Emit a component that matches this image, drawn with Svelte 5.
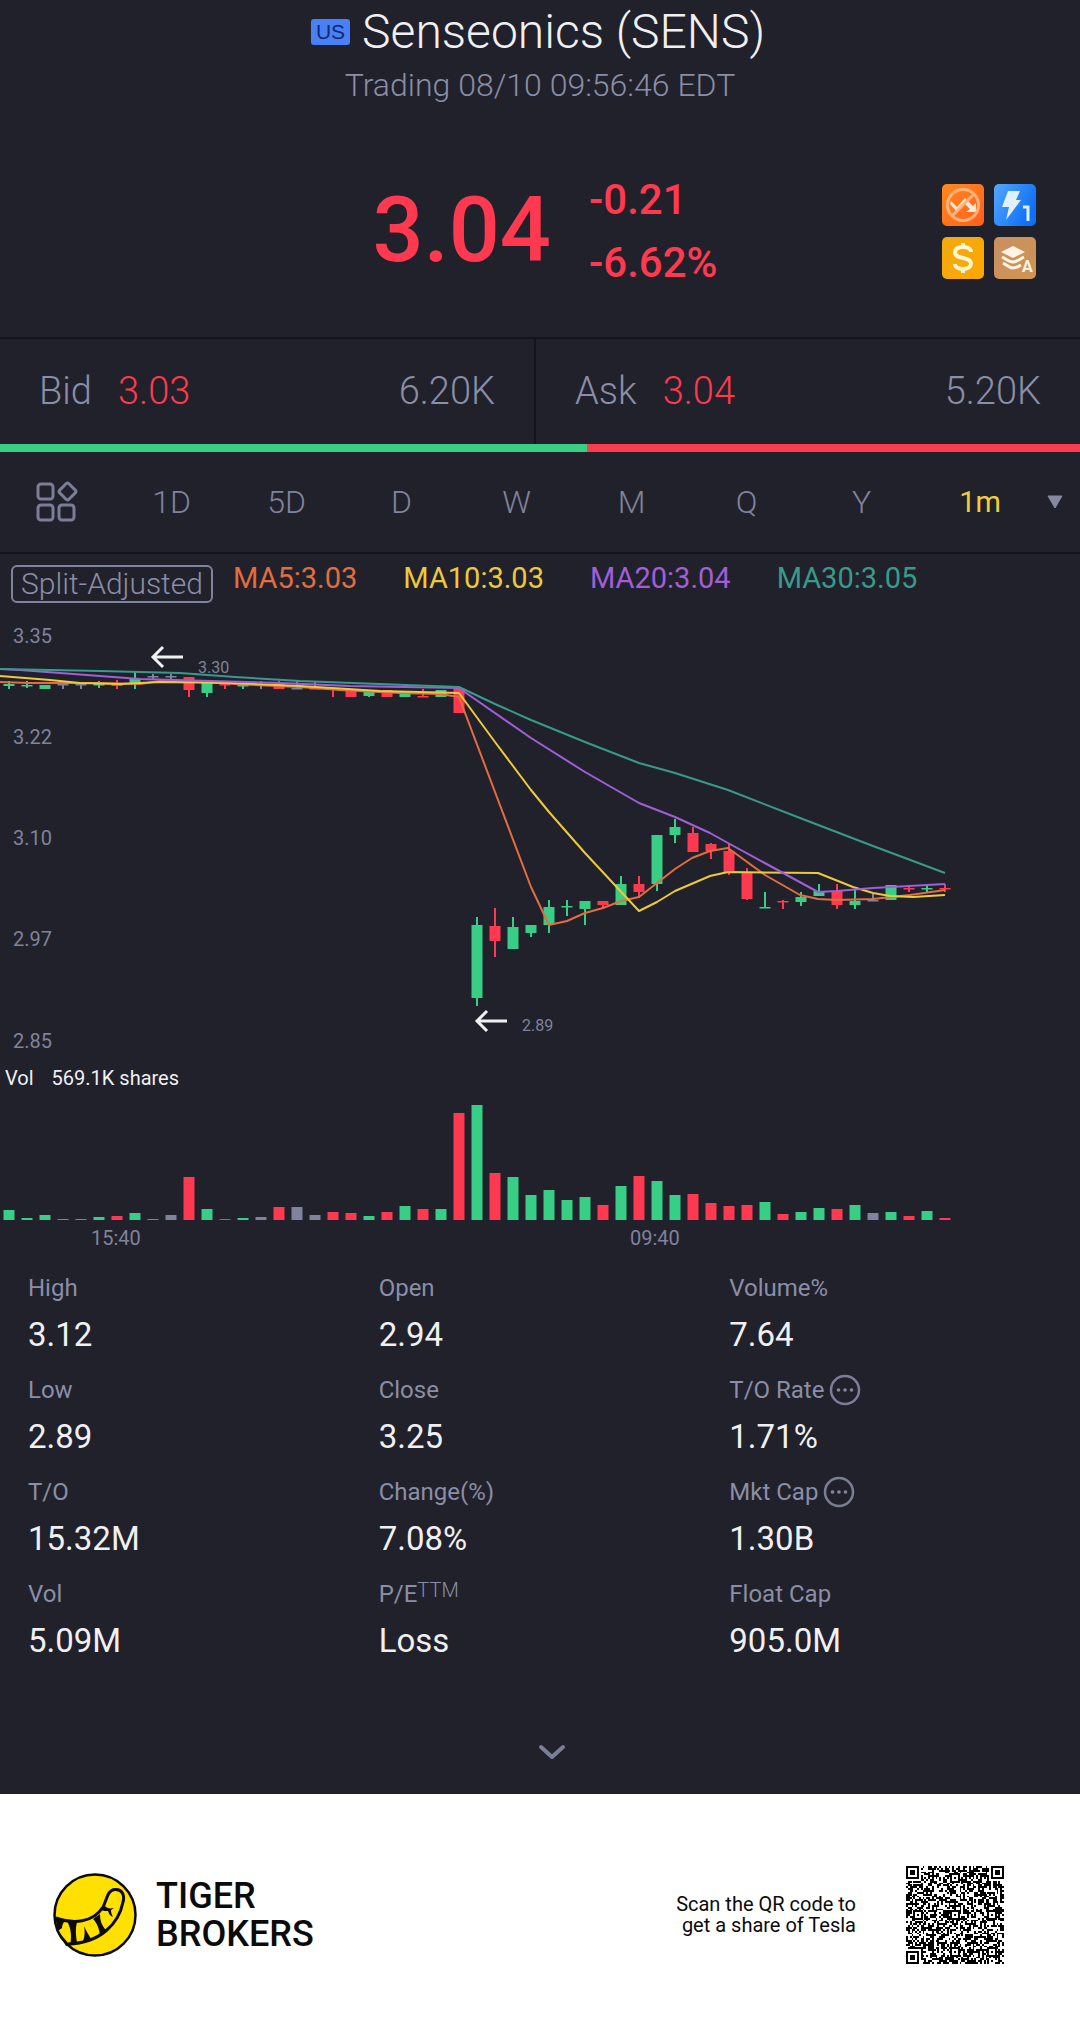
<script lang="ts">
    const periods = ['1D', '5D', 'D', 'W', 'M', 'Q', 'Y'];

    const averages = [
        { label: 'MA5:3.03', cls: 'ma5' },
        { label: 'MA10:3.03', cls: 'ma10' },
        { label: 'MA20:3.04', cls: 'ma20' },
        { label: 'MA30:3.05', cls: 'ma30' }
    ];

    const stats = [
        { label: 'High', value: '3.12' },
        { label: 'Open', value: '2.94' },
        { label: 'Volume%', value: '7.64' },
        { label: 'Low', value: '2.89' },
        { label: 'Close', value: '3.25' },
        { label: 'T/O Rate', value: '1.71%', more: true },
        { label: 'T/O', value: '15.32M' },
        { label: 'Change(%)', value: '7.08%' },
        { label: 'Mkt Cap', value: '1.30B', more: true },
        { label: 'Vol', value: '5.09M' },
        { label: 'P/E', sup: 'TTM', value: 'Loss' },
        { label: 'Float Cap', value: '905.0M' }
    ];

    const axis = [
        { price: '3.35', y: 643 },
        { price: '3.22', y: 744 },
        { price: '3.10', y: 845 },
        { price: '2.97', y: 946 },
        { price: '2.85', y: 1048 }
    ];

    // direction, wick top, body top, body bottom, wick bottom, volume
    type Candle = ['up' | 'down' | 'flat', number, number, number, number, number];
    const candles: Candle[] = [
        ['up', 681, 684, 686, 689, 10],
        ['up', 681, 685, 686, 688, 2],
        ['up', 685, 685, 689, 689, 5],
        ['flat', 682, 684, 685, 689, 1],
        ['flat', 682, 684, 685, 689, 1],
        ['up', 681, 684, 685, 688, 3],
        ['down', 680, 684, 686, 689, 4],
        ['up', 672, 678, 683, 689, 7],
        ['flat', 674, 676, 677, 680, 1],
        ['flat', 674, 676, 677, 680, 5],
        ['down', 677, 677, 690, 697, 43],
        ['up', 683, 683, 693, 697, 11],
        ['down', 684, 684, 685, 689, 1],
        ['up', 683, 685, 686, 689, 2],
        ['flat', 681, 684, 685, 689, 3],
        ['down', 681, 684, 689, 689, 13],
        ['flat', 680, 688, 689, 689, 13],
        ['flat', 681, 688, 689, 689, 5],
        ['down', 688, 688, 689, 697, 8],
        ['down', 689, 689, 697, 697, 7],
        ['up', 690, 690, 696, 697, 4],
        ['down', 690, 690, 697, 697, 8],
        ['up', 692, 692, 697, 697, 14],
        ['down', 689, 696, 697, 697, 11],
        ['up', 690, 690, 697, 697, 11],
        ['down', 688, 688, 713, 713, 107],
        ['up', 917, 925, 998, 1006, 115],
        ['down', 908, 926, 941, 957, 47],
        ['up', 917, 927, 949, 949, 43],
        ['up', 925, 925, 933, 937, 25],
        ['up', 900, 907, 925, 933, 30],
        ['up', 900, 906, 907, 916, 20],
        ['up', 901, 901, 909, 925, 23],
        ['down', 901, 901, 905, 909, 15],
        ['up', 876, 884, 905, 905, 34],
        ['down', 876, 884, 892, 898, 44],
        ['up', 835, 835, 884, 891, 39],
        ['up', 819, 827, 835, 843, 25],
        ['down', 827, 833, 852, 852, 26],
        ['down', 843, 844, 851, 859, 17],
        ['down', 844, 851, 872, 875, 14],
        ['down', 868, 872, 899, 900, 15],
        ['up', 892, 907, 908, 908, 18],
        ['down', 900, 901, 902, 909, 6],
        ['up', 892, 897, 902, 906, 8],
        ['up', 884, 891, 896, 896, 12],
        ['down', 884, 891, 905, 909, 11],
        ['up', 889, 901, 905, 909, 15],
        ['flat', 894, 900, 901, 901, 7],
        ['up', 885, 885, 900, 900, 8],
        ['down', 885, 888, 889, 892, 4],
        ['up', 884, 888, 889, 892, 9],
        ['down', 884, 888, 889, 892, 2]
    ];
    const candleX = (i: number) => 9 + i * 18;

    const lines = [
        {
            cls: 'ma5',
            points:
                '0,682 30,683 100,683 140,684 160,681 200,682 235,684 300,687 340,690 400,693 440,694 459,697 495,792 531,887 549,925 567,921 585,913 603,908 621,901 639,897 657,883 675,869 692,858 710,851 728,848 765,875 800,895 818,899 837,900 873,899 910,895 945,890'
        },
        {
            cls: 'ma10',
            points:
                '0,676 50,680 80,683 120,684 160,682 230,683 300,686 380,691 459,693 495,742 531,790 549,812 585,853 639,911 657,902 675,891 710,876 728,872 818,873 853,887 873,893 890,896 913,897 945,895'
        },
        {
            cls: 'ma20',
            points:
                '0,669 20,670 60,673 140,679 280,683 350,686 459,688 531,738 585,772 639,803 675,817 710,833 728,843 818,892 837,891 873,888 945,884'
        },
        {
            cls: 'ma30',
            points:
                '0,669 100,671 180,673 235,677 300,681 459,687 495,704 531,720 585,742 639,763 675,773 728,790 800,818 873,846 945,873'
        }
    ];

    const QR_SIZE = 53;

    function ring(x: number, y: number, cx: number, cy: number) {
        return Math.max(Math.abs(x - cx), Math.abs(y - cy));
    }

    function buildQr() {
        const finders = [[3, 3], [49, 3], [3, 49]];
        const aligns = [[26, 6], [6, 26], [26, 26], [46, 26], [26, 46], [46, 46]];
        let seed = 20210;
        let d = '';
        for (let y = 0; y < QR_SIZE; y++) {
            for (let x = 0; x < QR_SIZE; x++) {
                seed = (seed * 1103515245 + 12345) % 2147483648;
                let on = seed / 2147483648 > 0.47;
                if (x === 6) on = y % 2 === 0;
                if (y === 6) on = x % 2 === 0;
                for (const [cx, cy] of aligns) {
                    const r = ring(x, y, cx, cy);
                    if (r <= 2) on = r !== 1;
                }
                for (const [cx, cy] of finders) {
                    const r = ring(x, y, cx, cy);
                    if (r <= 4) on = r < 2 || r === 3;
                }
                if (on) d += `M${x} ${y}h1v1h-1z`;
            }
        }
        return d;
    }

    const qrPath = buildQr();
</script>

<main class="page">
    <header class="head">
        <h1 class="title"><span class="market">US</span>Senseonics (SENS)</h1>
        <p class="status">Trading 08/10 09:56:46 EDT</p>
    </header>

    <section class="quote">
        <div class="quote-main">
            <span class="price">3.04</span>
            <div class="change">
                <span>-0.21</span>
                <span>-6.62%</span>
            </div>
        </div>
        <div class="badges">
            <svg viewBox="0 0 42 42">
                <defs>
                    <linearGradient id="g-orange" x1="0" y1="0" x2="1" y2="1">
                        <stop offset="0" stop-color="#ff8a1f" />
                        <stop offset="1" stop-color="#ff5f1c" />
                    </linearGradient>
                </defs>
                <rect width="42" height="42" rx="5" fill="url(#g-orange)" />
                <path d="M9 17l6 6 8-9 8 8 3-3v9H24l4-3-5-5-8 8-7-8z" fill="#ffe9d6" />
                <g fill="none" stroke="#ffb27c" stroke-width="3">
                    <circle cx="21" cy="21" r="15.500" />
                    <path d="M10 32L32 10" />
                </g>
            </svg>
            <svg viewBox="0 0 42 42">
                <defs>
                    <linearGradient id="g-blue" x1="0" y1="0" x2="1" y2="0.500">
                        <stop offset="0" stop-color="#53a8ff" />
                        <stop offset="1" stop-color="#0f6ff5" />
                    </linearGradient>
                </defs>
                <rect width="42" height="42" rx="5" fill="url(#g-blue)" />
                <path d="M14 7h12l-4 9h5L12 36l3-13H8z" fill="#dff0ff" />
                <path d="M29 23h5v14" fill="none" stroke="#dff0ff" stroke-width="3" />
            </svg>
            <svg viewBox="0 0 42 42">
                <defs>
                    <linearGradient id="g-gold" x1="0" y1="0" x2="1" y2="1">
                        <stop offset="0" stop-color="#f0ab13" />
                        <stop offset="1" stop-color="#ffa600" />
                    </linearGradient>
                </defs>
                <rect width="42" height="42" rx="5" fill="url(#g-gold)" />
                <path
                    d="M29 15c0-3-3-5-8-5s-8 2-8 5.500 3 4.500 8 5.500 8 2.500 8 5.500-3 5.500-8 5.500-8-2-8-5M21 6v4M21 32v4"
                    fill="none"
                    stroke="#fff6d2"
                    stroke-width="4"
                />
            </svg>
            <svg viewBox="0 0 42 42">
                <defs>
                    <linearGradient id="g-bronze" x1="0" y1="0" x2="1" y2="1">
                        <stop offset="0" stop-color="#c98f62" />
                        <stop offset="1" stop-color="#cf954f" />
                    </linearGradient>
                </defs>
                <rect width="42" height="42" rx="5" fill="url(#g-bronze)" />
                <path d="M19 9l12 6-12 6-12-6z" fill="#fff3e6" />
                <path d="M8 20c4 2 7 5 11 5s7-3 11-5M9 26c4 2 6 5 10 5s6-2 8-3" fill="none" stroke="#fff3e6" stroke-width="3" />
                <text class="badge-letter" x="28" y="35">A</text>
            </svg>
        </div>
    </section>

    <section class="book">
        <div class="side bid">
            <span>Bid</span>
            <span class="side-price">3.03</span>
            <span class="side-size">6.20K</span>
        </div>
        <div class="side ask">
            <span>Ask</span>
            <span class="side-price">3.04</span>
            <span class="side-size">5.20K</span>
        </div>
    </section>
    <div class="ratio"><div class="ratio-bid" style="width: {(6.2 / 11.4) * 100}%"></div></div>

    <nav class="tabs">
        <button class="tab" aria-label="Indicators">
            <svg viewBox="0 0 42 42" width="42" height="42" fill="none" stroke="#7b7e97" stroke-width="3">
                <rect x="2" y="3" width="15" height="15" rx="3" />
                <rect x="2" y="24" width="15" height="15" rx="3" />
                <rect x="23" y="24" width="15" height="15" rx="3" />
                <rect x="25" y="4" width="13" height="13" rx="2" transform="rotate(45 31.500 10.500)" />
            </svg>
        </button>
        {#each periods as period}
            <button class="tab">{period}</button>
        {/each}
        <button class="tab active">
            1m
            <svg viewBox="0 0 16 14" width="16" height="14"><path d="M1 1h14L8 13z" fill="#85889f" stroke="#85889f" stroke-linejoin="round" /></svg>
        </button>
    </nav>

    <section class="legend">
        <span class="split">Split-Adjusted</span>
        <div class="averages">
            {#each averages as ma}
                <span class={ma.cls}>{ma.label}</span>
            {/each}
        </div>
    </section>

    <!-- Candles -->
    <svg class="chart" viewBox="0 610 1080 450">
        {#each axis as tick}
            <text class="axis" x="13" y={tick.y}>{tick.price}</text>
        {/each}
        {#each candles as [dir, high, top, bottom, low], i}
            <g class={dir}>
                <rect x={candleX(i) - 1} y={high} width="2" height={low - high} />
                <rect x={candleX(i) - 5.5} y={top} width="11" height={Math.max(bottom - top, 1.5)} />
            </g>
        {/each}
        {#each lines as line}
            <polyline class="line {line.cls}" points={line.points} />
        {/each}
        <g class="pointer">
            <path d="M183 657H153M163 647l-10 10 10 10" />
            <path d="M507 1021H477M487 1011l-10 10 10 10" />
        </g>
        <text class="mark" x="198" y="673">3.30</text>
        <text class="mark" x="522" y="1031">2.89</text>
    </svg>

    <!-- Volume -->
    <p class="vol-caption"><span>Vol</span><span>569.1K shares</span></p>
    <svg class="chart" viewBox="0 0 1080 155">
        {#each candles as [dir, , , , , volume], i}
            <rect class={dir} x={candleX(i) - 5.5} y={123 - volume} width="11" height={volume} />
        {/each}
        <text class="axis" x="91" y="148">15:40</text>
        <text class="axis" x="630" y="148">09:40</text>
    </svg>

    <dl class="stats">
        {#each stats as stat}
            <div class="stat">
                <dt>
                    <span>{stat.label}{#if stat.sup}<sup>{stat.sup}</sup>{/if}</span>
                    {#if stat.more}
                        <svg viewBox="0 0 32 32" width="32" height="32">
                            <circle cx="16" cy="16" r="14" fill="none" stroke="#7b7e97" stroke-width="2.500" />
                            <g fill="#85889f">
                                <circle cx="9.500" cy="16" r="1.800" />
                                <circle cx="16" cy="16" r="1.800" />
                                <circle cx="22.500" cy="16" r="1.800" />
                            </g>
                        </svg>
                    {/if}
                </dt>
                <dd>{stat.value}</dd>
            </div>
        {/each}
    </dl>

    <div class="expand">
        <button aria-label="Show more">
            <svg viewBox="0 0 28 16" width="28" height="16">
                <path d="M3 3l11 10L25 3" fill="none" stroke="#7b7e97" stroke-width="4" stroke-linecap="round" stroke-linejoin="round" />
            </svg>
        </button>
    </div>
</main>

<footer class="footer">
    <svg class="logo" viewBox="0 0 84 84">
        <circle cx="42" cy="42" r="40.500" fill="#ffe000" stroke="#0b0b0b" stroke-width="2.500" />
        <path
            d="M3 45C20 51 40 50 50 34C54 27 54 17 62 16.500C69 16 72 22 70 29C66 50 48 70 15 71"
            fill="none"
            stroke="#0b0b0b"
            stroke-width="3"
        />
        <path
            d="M2 44l10 4c-2 2-3 4-3 7l-4 3zM14 48l10 1c-2 7-1 14 0 21l-7 2c2-8 1-17-3-24zM31 53c2 5 5 9 7 13l-8 2c2-5 2-10 1-15zM40 46l7-5c0 7 2 12 6 16l-6 5c-1-7-3-12-7-16zM48 37l4-4c2 2 4 3 9 2l-3 2c0 3 1 5 2 7-3-1-4-3-5-6-2 0-5 0-7-1zM5 58l10 12 4 2-6 1z"
            fill="#0b0b0b"
        />
    </svg>
    <div class="brand">TIGER<br />BROKERS</div>
    <p class="scan">Scan the QR code to<br />get a share of Tesla</p>
    <svg class="qr" viewBox="0 0 53 53" role="img" aria-label="QR code">
        <path d={qrPath} fill="#000" shape-rendering="crispEdges" />
    </svg>
</footer>

<style>
    :global(body) {
        background: #fff;
        font-family: Roboto, 'Liberation Sans', sans-serif;
    }

    .page {
        background: #21212b;
        color: #8a8ea6;
    }

    .head {
        text-align: center;
    }

    .title {
        display: flex;
        align-items: center;
        justify-content: center;
        gap: 12px;
        margin: 0;
        padding-right: 4px;
        color: #f0f0f2;
        font-size: 48px;
        font-weight: 300;
        line-height: 64px;
    }

    .market {
        padding: 0 5px;
        border-radius: 3px;
        background: #4a80f7;
        color: #102a63;
        font-family: 'Liberation Sans', sans-serif;
        font-size: 21px;
        font-weight: 400;
        line-height: 26px;
    }

    .status {
        margin: 0;
        font-size: 32px;
        font-weight: 300;
        line-height: 42px;
    }

    .quote {
        display: grid;
        grid-template-columns: 1fr auto 1fr;
        align-items: center;
        margin-top: 18px;
        padding: 44px 44px 43px 54px;
    }

    .quote-main {
        display: flex;
        grid-column: 2;
        align-items: center;
        gap: 38px;
        color: #ff3950;
        font-weight: 500;
    }

    .price {
        font-size: 90px;
        line-height: 126px;
    }

    .change {
        display: flex;
        flex-direction: column;
        font-size: 42px;
        line-height: 63px;
    }

    .badges {
        display: grid;
        grid-template-columns: 42px 42px;
        justify-self: end;
        gap: 11px 10px;
    }

    .badges svg {
        display: block;
    }

    .badge-letter {
        fill: #fff3e6;
        font-size: 16px;
        font-weight: 700;
    }

    .book {
        display: grid;
        grid-template-columns: 67fr 68fr;
        border-top: 2px solid #14141d;
        font-size: 38px;
        font-weight: 300;
        line-height: 105px;
    }

    .side {
        display: flex;
        gap: 26px;
        padding: 0 39px;
    }

    .bid {
        border-right: 2px solid #14141d;
    }

    .side-price {
        color: #ff3950;
    }

    .side-size {
        margin-left: auto;
    }

    .ratio {
        height: 8px;
        background: #fb3b50;
    }

    .ratio-bid {
        height: 100%;
        background: #38ce86;
    }

    .tabs {
        display: grid;
        grid-template-columns: 114fr repeat(7, 115fr) 161fr;
        border-bottom: 2px solid #14141d;
    }

    .tab {
        display: flex;
        align-items: center;
        justify-content: center;
        padding: 0;
        border: 0;
        background: none;
        color: #7f839b;
        font: inherit;
        font-size: 32px;
        font-weight: 300;
        line-height: 100px;
    }

    .active {
        justify-content: flex-end;
        gap: 46px;
        padding-right: 17px;
        color: #f2cf3a;
        font-size: 29px;
        font-weight: 400;
    }

    .legend {
        display: flex;
        align-items: flex-start;
        gap: 20px;
        padding: 11px 11px 7px;
        font-size: 29px;
        font-weight: 400;
    }

    .split {
        box-sizing: border-box;
        padding: 0 8px;
        border: 2px solid #7f839b;
        border-radius: 6px;
        font-size: 30px;
        font-weight: 300;
        line-height: 34px;
    }

    .averages {
        display: flex;
        gap: 46px;
        line-height: 26px;
    }

    .ma5 {
        color: #e26d3f;
    }

    .ma10 {
        color: #ecca3c;
    }

    .ma20 {
        color: #a05fd9;
    }

    .ma30 {
        color: #389a8a;
    }

    .chart {
        display: block;
        width: 100%;
    }

    .axis {
        fill: #7f839b;
        font-size: 20px;
    }

    .mark {
        fill: #7f839b;
        font-size: 16px;
    }

    .up {
        fill: #38ce86;
    }

    .down {
        fill: #ff3950;
    }

    .flat {
        fill: #7f839b;
    }

    .line {
        fill: none;
        stroke: currentColor;
        stroke-width: 2;
        stroke-linejoin: round;
    }

    .pointer {
        fill: none;
        stroke: #f0f0f2;
        stroke-width: 3;
    }

    .vol-caption {
        display: flex;
        gap: 18px;
        margin: 0;
        padding: 0 5px;
        color: #f0f0f2;
        font-size: 20px;
        line-height: 37px;
    }

    .stats {
        display: grid;
        grid-template-columns: repeat(3, 1fr);
        row-gap: 8px;
        margin: 0;
        padding: 16px 0 0 28px;
    }

    .stat dt {
        display: flex;
        align-items: center;
        gap: 5px;
        font-size: 24px;
        line-height: 40px;
    }

    .stat sup {
        font-size: 20px;
        font-weight: 300;
        line-height: 0;
        vertical-align: 5px;
    }

    .stat dd {
        margin: 0;
        color: #f0f0f2;
        font-size: 33px;
        line-height: 54px;
    }

    .expand {
        display: flex;
        justify-content: center;
        padding: 42px 0 0 24px;
    }

    .expand button {
        display: flex;
        align-items: center;
        padding: 34px 28px;
        border: 0;
        background: none;
    }

    .footer {
        display: flex;
        align-items: center;
        padding: 72px 76px 72px 53px;
        color: #0b0b0b;
    }

    .logo {
        width: 84px;
        height: 84px;
    }

    .brand {
        margin-left: 19px;
        font-size: 36px;
        font-weight: 500;
        line-height: 38px;
    }

    .scan {
        margin: 0 50px 0 auto;
        font-size: 20px;
        line-height: 21px;
        text-align: right;
    }

    .qr {
        width: 98px;
        height: 98px;
    }
</style>
